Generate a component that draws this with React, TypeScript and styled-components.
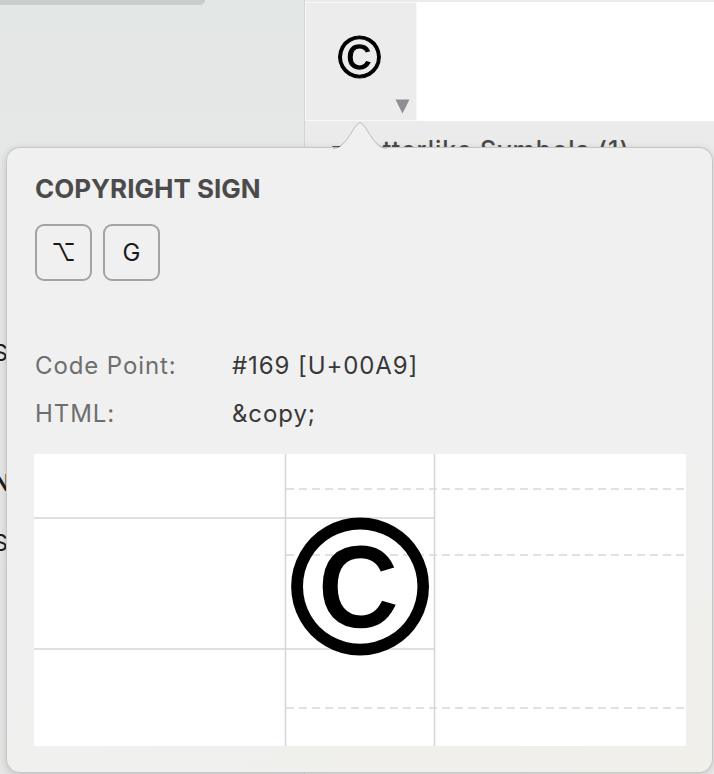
import React from 'react';
import styled, { createGlobalStyle } from 'styled-components';

const GlobalStyle = createGlobalStyle`
  html, body {
    margin: 0;
    padding: 0;
  }
  body {
    width: 714px;
    height: 774px;
    overflow: hidden;
    background: #e8e8e8;
    font-family: Inter, "Noto Sans", "DejaVu Sans", sans-serif;
  }
`;

const App = () => {
  return (
    <>
      <GlobalStyle />
      <Window>
        <Sidebar>
          <SearchBar />
          <SideList>
            <SideItem $gap={104}>Sy</SideItem>
            <SideItem $bold $gap={34}>
              Na
            </SideItem>
            <SideItem>Sh</SideItem>
          </SideList>
        </Sidebar>
        <Divider />
        <Main>
          <TopStrip />
          <TopRow>
            <Cell>
              <CellGlyph>©</CellGlyph>
              <CellMenu width="15" height="15" viewBox="0 0 15 15">
                <path d="M0.5 0.5 L14.5 0.5 L7.5 14.5 Z" fill="#8e8e93" />
              </CellMenu>
            </Cell>
          </TopRow>
          <SectionHeader>
            <svg width="10" height="9" viewBox="0 0 10 9">
              <path d="M0 0 L10 0 L5 9 Z" fill="#555" />
            </svg>
            <span>Letterlike Symbols (1)</span>
          </SectionHeader>
        </Main>

        <Popover>
          <Tail width="54" height="27" viewBox="0 0 54 27">
            <path d="M0 27 C 14 27, 21 1, 27 1 C 33 1, 40 27, 54 27 Z" fill="#f0f0f0" />
            <path
              d="M0 26.5 C 14 26.5, 21 0.8, 27 0.8 C 33 0.8, 40 26.5, 54 26.5"
              fill="none"
              stroke="rgba(0,0,0,0.2)"
              strokeWidth="1"
            />
          </Tail>
          <Title>COPYRIGHT SIGN</Title>
          <Keys>
            <Key>⌥</Key>
            <Key>G</Key>
          </Keys>
          <Info>
            <Label>Code Point:</Label>
            <Value>#169 [U+00A9]</Value>
            <Label>HTML:</Label>
            <Value>&amp;copy;</Value>
          </Info>
          <Preview>
            <svg width="652" height="292" viewBox="0 0 652 292">
              <g stroke="#d6d6d6" strokeWidth="1.6">
                <line x1="251.5" y1="0" x2="251.5" y2="292" />
                <line x1="400.5" y1="0" x2="400.5" y2="292" />
                <line x1="0" y1="64" x2="401" y2="64" />
                <line x1="0" y1="195" x2="401" y2="195" />
              </g>
              <g stroke="#d8d8d8" strokeWidth="1.6" strokeDasharray="8 5">
                <line x1="252" y1="35" x2="652" y2="35" />
                <line x1="252" y1="101" x2="652" y2="101" />
                <line x1="252" y1="254" x2="652" y2="254" />
              </g>
            </svg>
            <BigGlyph>©</BigGlyph>
          </Preview>
        </Popover>
      </Window>
    </>
  );
};

export default App;

const Window = styled.div`
  position: relative;
  width: 714px;
  height: 774px;
  overflow: hidden;
  display: grid;
  grid-template-columns: 304px 1px 1fr;
  background: linear-gradient(#e3e7e6, #e8e8e8 220px, #e6e6e6);
`;

const Sidebar = styled.div`
  display: flex;
  flex-direction: column;
`;

const SearchBar = styled.div`
  width: 205px;
  height: 5px;
  background: #c8cecd;
  border-bottom-right-radius: 7px;
`;

const SideList = styled.div`
  display: flex;
  flex-direction: column;
  margin-left: -7px;
  padding-top: 335px;
`;

const SideItem = styled.div<{ $bold?: boolean; $gap?: number }>`
  font-size: 23px;
  line-height: 26px;
  font-weight: ${({ $bold }) => ($bold ? 700 : 400)};
  color: #1d1d1d;
  margin-bottom: ${({ $gap }) => $gap || 0}px;
  white-space: nowrap;
`;

const Divider = styled.div`
  background: #d3d5d5;
`;

const Main = styled.div`
  display: flex;
  flex-direction: column;
  background: #ebebeb;
`;

const TopStrip = styled.div`
  height: 2px;
  background: #ebebeb;
`;

const TopRow = styled.div`
  height: 119px;
  display: flex;
  background: #ffffff;
`;

const Cell = styled.div`
  position: relative;
  box-sizing: border-box;
  width: 112px;
  height: 119px;
  border: 1px solid #f8f8f8;
  background: #ececec;
  display: flex;
  align-items: center;
  justify-content: center;
  padding: 0 3px 6px 0;
`;

const CellGlyph = styled.span`
  font-family: "Liberation Sans", Arial, sans-serif;
  font-size: 59px;
  line-height: 1;
  color: #000;
  -webkit-text-stroke: 1.2px #000;
`;

const CellMenu = styled.svg`
  position: absolute;
  right: 6px;
  bottom: 6px;
`;

const SectionHeader = styled.div`
  display: flex;
  align-items: center;
  gap: 10px;
  padding: 14px 0 0 27px;
  font-size: 25px;
  line-height: 30px;
  font-weight: 500;
  letter-spacing: 1px;
  color: #4a4a4a;
  white-space: nowrap;
`;

const Popover = styled.div`
  position: absolute;
  left: 6px;
  top: 147px;
  box-sizing: border-box;
  width: 707px;
  height: 626px;
  padding: 26px 28px 0;
  background: linear-gradient(160deg, #f0f0f0 60%, #f0efea);
  border: 1px solid rgba(0, 0, 0, 0.17);
  border-radius: 14px;
  box-shadow: 0 2px 8px rgba(0, 0, 0, 0.16);
  display: flex;
  flex-direction: column;
`;

const Tail = styled.svg`
  position: absolute;
  left: 326px;
  top: -26px;
`;

const Title = styled.div`
  font-size: 26px;
  line-height: 30px;
  font-weight: 700;
  color: #4b4b4b;
`;

const Keys = styled.div`
  display: flex;
  gap: 11px;
  margin-top: 20px;
`;

const Key = styled.div`
  box-sizing: border-box;
  width: 57px;
  height: 57px;
  border: 2px solid #a3a3a3;
  border-radius: 9px;
  display: flex;
  align-items: center;
  justify-content: center;
  font-size: 24px;
  color: #1a1a1a;
`;

const Info = styled.div`
  display: grid;
  grid-template-columns: 197px 1fr;
  margin-top: 61px;
  font-size: 24px;
  letter-spacing: 0.9px;
  line-height: 48px;
`;

const Label = styled.div`
  color: #6e6e6e;
`;

const Value = styled.div`
  color: #383838;
`;

const Preview = styled.div`
  position: relative;
  width: 652px;
  height: 292px;
  margin: 16px 0 0 -1px;
  background: #ffffff;
  svg {
    display: block;
  }
`;

const BigGlyph = styled.span`
  position: absolute;
  left: 251px;
  top: 66px;
  width: 150px;
  height: 132px;
  display: flex;
  align-items: center;
  justify-content: center;
  font-family: "Liberation Sans", Arial, sans-serif;
  font-size: 191px;
  line-height: 1;
  color: #000;
  -webkit-text-stroke: 3px #000;
`;
